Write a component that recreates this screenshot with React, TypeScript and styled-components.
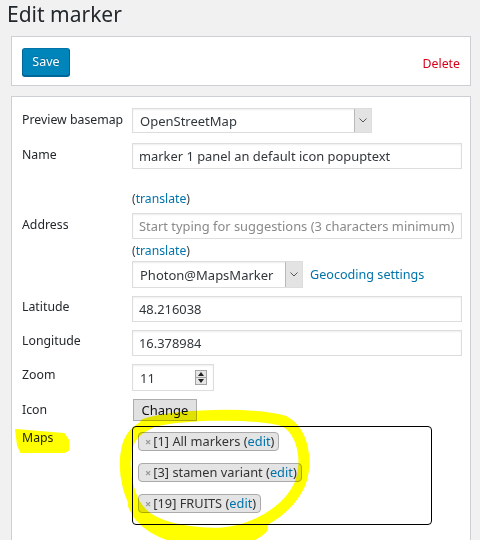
import React from "react";
import styled, { createGlobalStyle } from "styled-components";

const FONT = `"Noto Sans", "Open Sans", "DejaVu Sans", sans-serif`;

const GlobalStyle = createGlobalStyle`
  html, body { margin: 0; padding: 0; background: #f1f1f1; }
  body { font-family: ${FONT}; font-size: 12.2px; color: #23282d; }
  * { box-sizing: border-box; }
`;

const Page = styled.div`
  position: relative;
  width: 480px;
  height: 540px;
  overflow: hidden;
  padding: 0 9px 0 11px;
`;

const Title = styled.h1`
  margin: 0 0 0 -4px;
  height: 36px;
  font-size: 21px;
  font-weight: 400;
  line-height: 29px;
  color: #23282d;
`;

const ActionBar = styled.div`
  display: flex;
  justify-content: space-between;
  align-items: center;
  height: 50px;
  padding: 10px 10px 9px 10px;
  background: #fff;
  border: 1px solid #ccd0d4;
`;

const SaveButton = styled.button`
  width: 48px;
  height: 28px;
  padding: 0 0 1px;
  font: 12.5px/26px ${FONT};
  color: #fff;
  background: #0085ba;
  border: 1px solid;
  border-color: #0073aa #006799 #006799;
  border-radius: 3px;
  box-shadow: 0 1px 0 #006799;
  text-shadow: 0 -1px 1px #006799;
  cursor: pointer;
`;

const DeleteLink = styled.a`
  font-size: 12.3px;
  color: #d7001a;
  text-decoration: none;
  margin-top: 4px;
`;

const FormPanel = styled.div`
  margin-top: 10px;
  padding: 11px 8px 20px 10px;
  background: #fff;
  border: 1px solid #ccd0d4;
  height: 480px;
`;

const Row = styled.div<{ $mt: number }>`
  display: flex;
  align-items: flex-start;
  margin-top: ${(p) => p.$mt}px;
`;

const Label = styled.div<{ $pt: number }>`
  width: 110px;
  flex-shrink: 0;
  padding-top: ${(p) => p.$pt}px;
  line-height: 18px;
  font-size: 12.3px;
  color: #23282d;
`;

const Field = styled.div`
  display: flex;
  flex-direction: column;
  align-items: flex-start;
`;

const InlineField = styled.div`
  display: flex;
  align-items: center;
  gap: 7px;
`;

const TextInput = styled.input<{ $w: number }>`
  width: ${(p) => p.$w}px;
  height: 26px;
  margin: 0;
  padding: 0 2px 0 6px;
  border: 1px solid #ddd;
  box-shadow: inset 0 1px 2px rgba(0, 0, 0, 0.07);
  background: #fff;
  font: 12.9px ${FONT};
  color: #32373c;
  outline: none;
  &::placeholder {
    color: #8a8a8a;
  }
`;

const SelectBox = styled.div<{ $w: number; $h: number }>`
  display: flex;
  width: ${(p) => p.$w}px;
  height: ${(p) => p.$h}px;
  border: 1px solid #ddd;
  background: #fff;
  box-shadow: inset 0 1px 2px rgba(0, 0, 0, 0.07);
`;

const SelectValue = styled.span`
  flex: 1;
  display: flex;
  align-items: center;
  padding-left: 7px;
  font-size: 13px;
  color: #32373c;
  white-space: nowrap;
  overflow: hidden;
`;

const SelectArrow = styled.span`
  width: 17px;
  display: flex;
  align-items: center;
  justify-content: center;
  background: #e3e3e3;
  border-left: 1px solid #b9b9b9;
`;

const TranslateLine = styled.div<{ $mt: number }>`
  margin-top: ${(p) => p.$mt}px;
  line-height: 18px;
  font-size: 12.2px;
  color: #444;
`;

const Link = styled.a<{ $size?: number }>`
  color: #0073aa;
  text-decoration: none;
  font-size: ${(p) => p.$size ?? 12.2}px;
`;

const Stack = styled.div<{ $mt: number }>`
  margin-top: ${(p) => p.$mt}px;
`;

const NumberBox = styled.div`
  display: flex;
  align-items: center;
  justify-content: space-between;
  width: 82px;
  height: 27px;
  padding: 0 6px 0 7px;
  border: 1px solid #ddd;
  background: #fff;
  box-shadow: inset 0 1px 2px rgba(0, 0, 0, 0.07);
  font-size: 13px;
  color: #32373c;
`;

const Spinner = styled.div`
  display: flex;
  flex-direction: column;
  width: 12px;
  height: 15px;
  border: 1px solid #a3a3a3;
  background: #e6e6e6;
`;

const SpinHalf = styled.span<{ $top?: boolean }>`
  flex: 1;
  display: flex;
  align-items: center;
  justify-content: center;
  border-bottom: ${(p) => (p.$top ? "1px solid #a3a3a3" : "none")};
`;

const ChangeButton = styled.button`
  width: 64px;
  height: 22px;
  margin: 0 0 0 1px;
  padding: 0;
  font: 13px/18px ${FONT};
  color: #111;
  background: #e1e1e1;
  border: 1px solid #adadad;
  border-radius: 0;
`;

const TagBox = styled.div`
  width: 300px;
  height: 99px;
  padding: 5px;
  display: flex;
  flex-direction: column;
  align-items: flex-start;
  gap: 12px;
  border: 1px solid #000;
  border-radius: 4px;
  background: #fff;
`;

const Tag = styled.span`
  display: inline-flex;
  align-items: center;
  height: 19px;
  padding: 0 4px 0 6px;
  background: #e4e4e4;
  border: 1px solid #aaa;
  border-radius: 4px;
  font-size: 12.8px;
  line-height: 17px;
  color: #333;
  white-space: nowrap;
`;

const TagRemove = styled.span`
  color: #999;
  font-weight: 700;
  font-size: 11px;
  margin-right: 2px;
`;

const Annotation = styled.svg`
  position: absolute;
  left: 0;
  top: 0;
  width: 480px;
  height: 540px;
  pointer-events: none;
  mix-blend-mode: multiply;
`;

const Chevron = () => (
  <svg width="8" height="5" viewBox="0 0 8 5">
    <polyline points="0.5,0.5 4,4 7.5,0.5" fill="none" stroke="#555" strokeWidth="1" />
  </svg>
);

const Tri = ({ up }: { up?: boolean }) => (
  <svg width="6" height="4" viewBox="0 0 6 4">
    <polygon points={up ? "0,4 3,0 6,4" : "0,0 3,4 6,0"} fill="#222" />
  </svg>
);

const Translate = ({ mt }: { mt: number }) => (
  <TranslateLine $mt={mt}>
    (<Link href="#">translate</Link>)
  </TranslateLine>
);

const maps = [
  { id: 1, name: "All markers" },
  { id: 3, name: "stamen variant" },
  { id: 19, name: "FRUITS" },
];

export default function App() {
  return (
    <Page>
      <GlobalStyle />
      <Title>Edit marker</Title>
      <ActionBar>
        <SaveButton>Save</SaveButton>
        <DeleteLink href="#">Delete</DeleteLink>
      </ActionBar>
      <FormPanel>
        <Row $mt={0}>
          <Label $pt={3}>Preview basemap</Label>
          <SelectBox $w={240} $h={25}>
            <SelectValue>OpenStreetMap</SelectValue>
            <SelectArrow>
              <Chevron />
            </SelectArrow>
          </SelectBox>
        </Row>
        <Row $mt={10}>
          <Label $pt={3}>Name</Label>
          <TextInput $w={330} defaultValue="marker 1 panel an default icon popuptext" />
        </Row>
        <Row $mt={10}>
          <Label $pt={37}>Address</Label>
          <Field>
            <Translate mt={11} />
            <Stack $mt={5}>
              <TextInput $w={330} placeholder="Start typing for suggestions (3 characters minimum)" />
            </Stack>
            <Translate mt={3} />
            <Stack $mt={1}>
              <InlineField>
                <SelectBox $w={171} $h={27}>
                  <SelectValue>Photon@MapsMarker</SelectValue>
                  <SelectArrow>
                    <Chevron />
                  </SelectArrow>
                </SelectBox>
                <Link href="#" $size={12.6}>Geocoding settings</Link>
              </InlineField>
            </Stack>
          </Field>
        </Row>
        <Row $mt={8}>
          <Label $pt={2}>Latitude</Label>
          <TextInput $w={330} defaultValue="48.216038" />
        </Row>
        <Row $mt={8}>
          <Label $pt={2}>Longitude</Label>
          <TextInput $w={330} defaultValue="16.378984" />
        </Row>
        <Row $mt={8}>
          <Label $pt={2}>Zoom</Label>
          <NumberBox>
            <span>11</span>
            <Spinner>
              <SpinHalf $top>
                <Tri up />
              </SpinHalf>
              <SpinHalf>
                <Tri />
              </SpinHalf>
            </Spinner>
          </NumberBox>
        </Row>
        <Row $mt={8}>
          <Label $pt={2}>Icon</Label>
          <ChangeButton>Change</ChangeButton>
        </Row>
        <Row $mt={5}>
          <Label $pt={3}>Maps</Label>
          <TagBox>
            {maps.map((m) => (
              <Tag key={m.id}>
                <TagRemove>×</TagRemove>[{m.id}] {m.name}&nbsp;(<Link href="#" $size={12.8}>edit</Link>)
              </Tag>
            ))}
          </TagBox>
        </Row>
      </FormPanel>
      <Annotation viewBox="0 0 480 540">
        <path
          d="M16 430 L64 434 L68 440 L68 450 L64 452 L21 452 L18 445 Z"
          fill="#ffff00"
          stroke="#ffff00"
          strokeWidth="2"
          strokeLinejoin="round"
        />
        <path
          d="M145 424 C175 414 250 412 284 421 C304 432 308 462 300 484 C290 506 268 522 240 530 C210 538 165 530 148 518 C128 505 122 470 127 448 C130 436 136 430 150 423"
          fill="none"
          stroke="#ffff00"
          strokeWidth="11"
          strokeLinecap="round"
          strokeLinejoin="round"
        />
        <path
          d="M134 505 C140 522 160 536 195 540 C225 544 250 540 262 528"
          fill="none"
          stroke="#ffff00"
          strokeWidth="12"
          strokeLinecap="round"
        />
      </Annotation>
    </Page>
  );
}
